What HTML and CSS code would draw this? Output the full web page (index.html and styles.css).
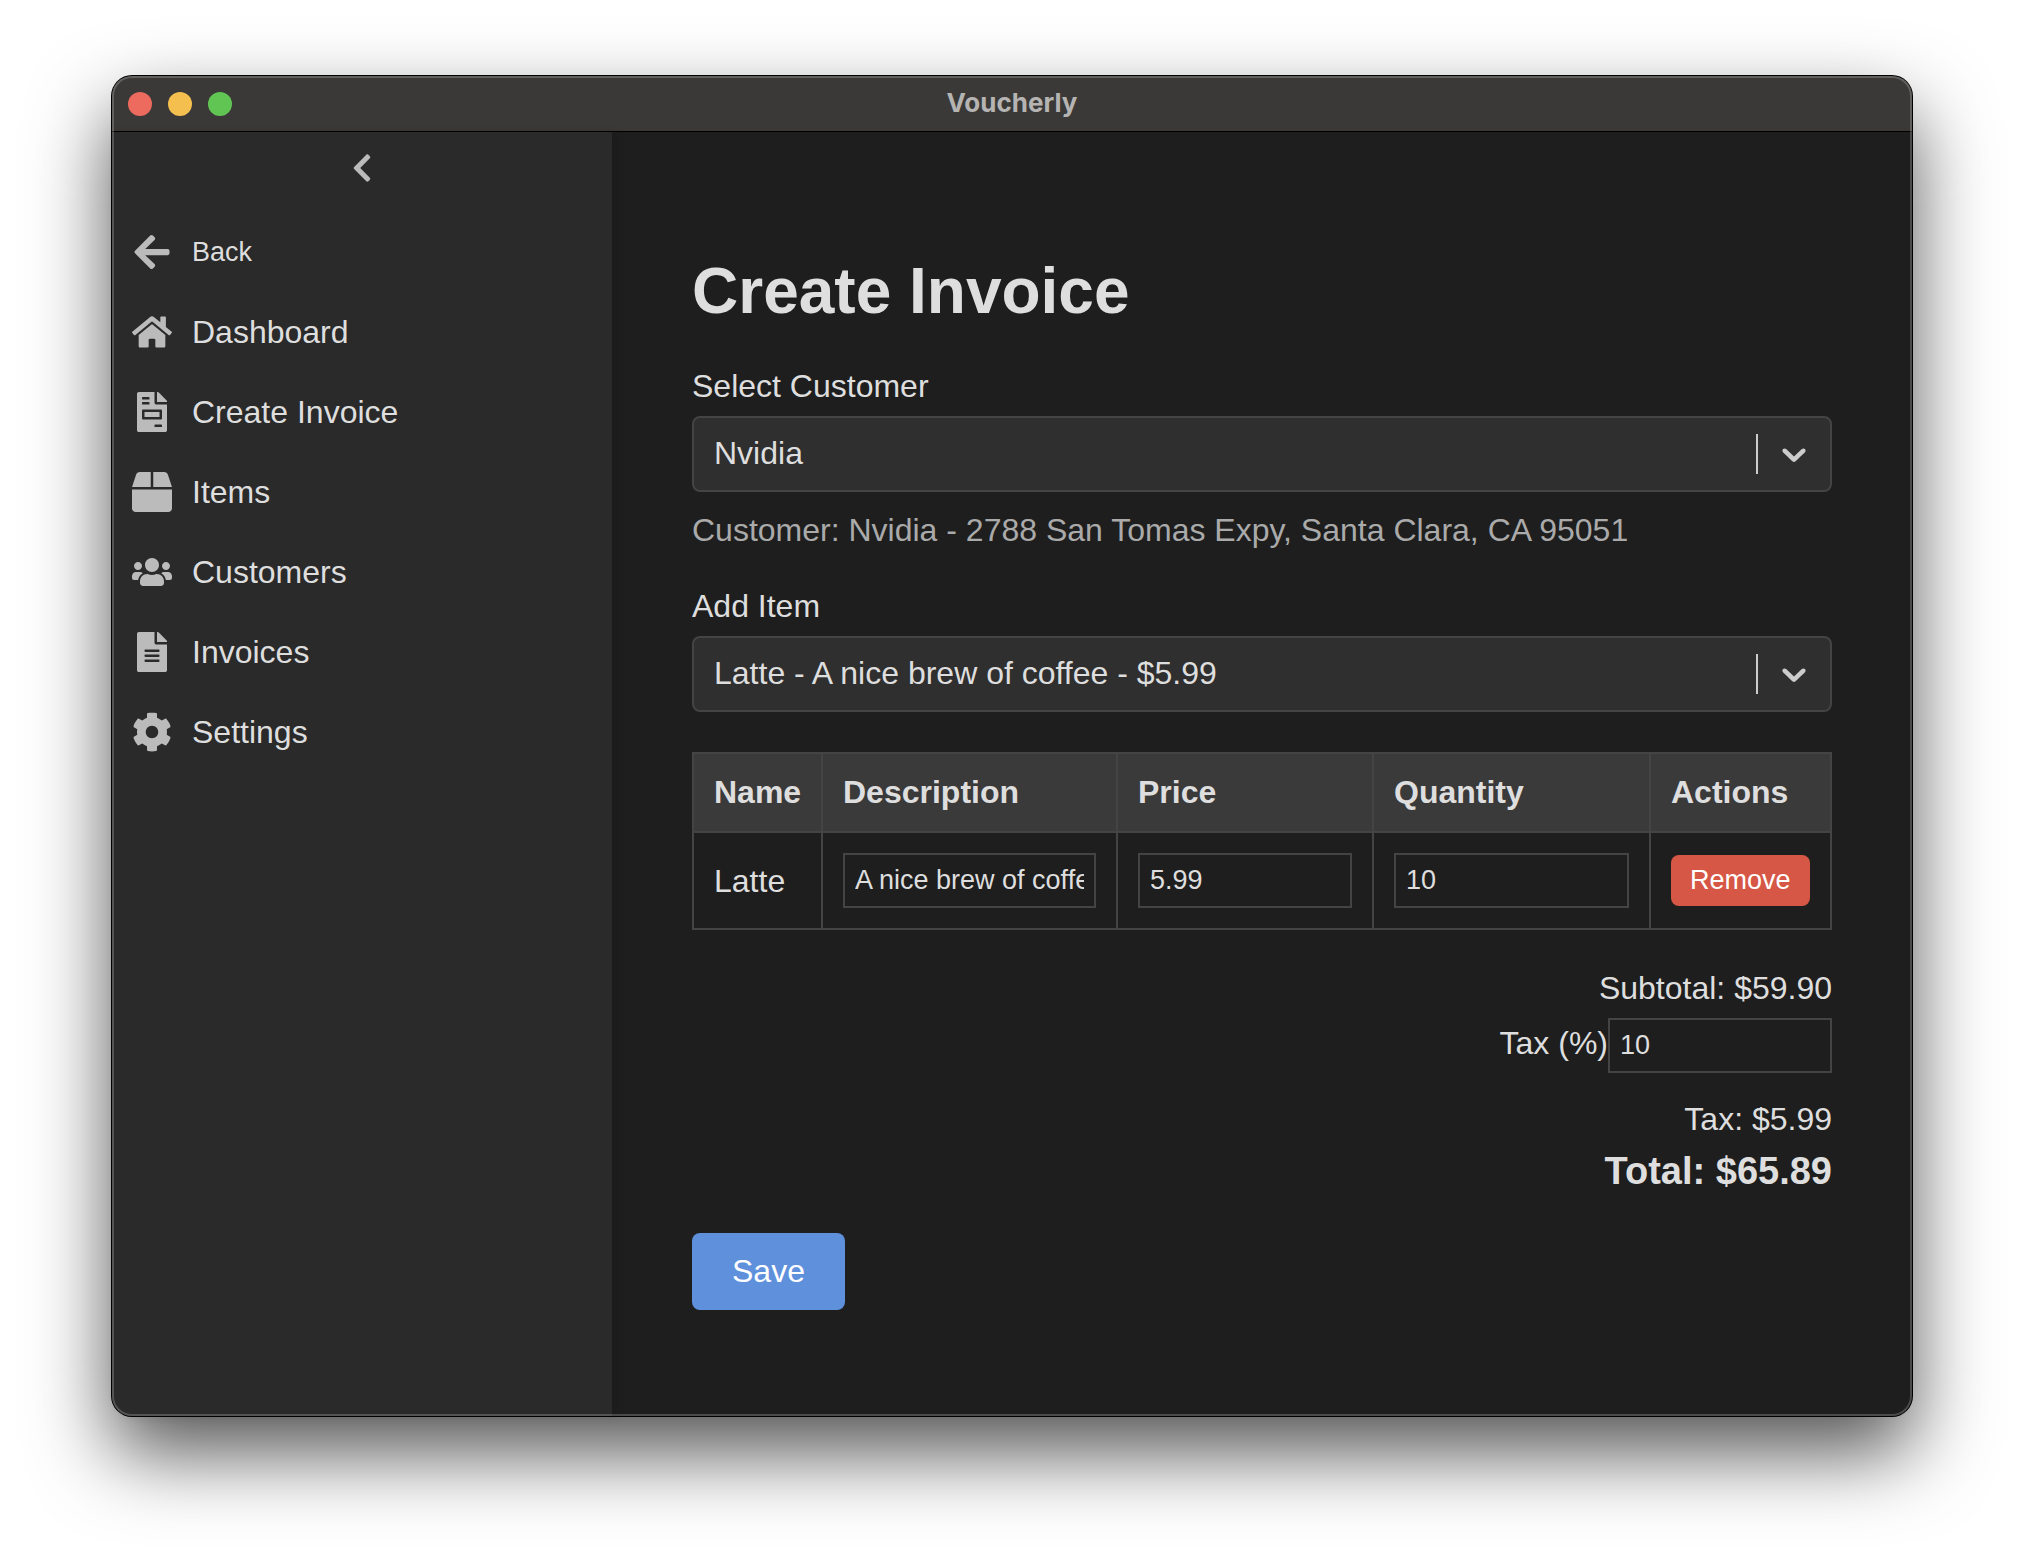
FILE: index.html
```html
<!DOCTYPE html>
<html lang="en">
<head>
<meta charset="utf-8">
<meta name="viewport" content="width=device-width, initial-scale=1">
<title>Voucherly</title>
<link rel="stylesheet" href="styles.css">
</head>
<body>
<div class="window">
  <header class="titlebar">
    <div class="lights">
      <button class="light light-close" type="button" aria-label="Close"></button>
      <button class="light light-minimize" type="button" aria-label="Minimize"></button>
      <button class="light light-zoom" type="button" aria-label="Zoom"></button>
    </div>
    <span class="titlebar-text">Voucherly</span>
  </header>
  <div class="body">
    <aside class="sidebar">
      <button class="toggle" type="button" aria-label="Collapse sidebar">
        <svg class="toggle-icon" viewBox="0 0 320 512" aria-hidden="true"><path d="M34.52 239.03L228.87 44.69c9.37-9.37 24.57-9.37 33.94 0l22.67 22.67c9.36 9.36 9.37 24.52.04 33.9L131.49 256l154.02 154.75c9.34 9.38 9.32 24.54-.04 33.9l-22.67 22.67c-9.37 9.37-24.57 9.37-33.94 0L34.52 272.97c-9.37-9.37-9.37-24.57 0-33.94z"/></svg>
      </button>
      <nav class="nav">
        <button class="nav-item nav-back" type="button">
          <svg class="nav-icon" viewBox="0 0 448 512" aria-hidden="true"><path d="M257.5 445.1l-22.2 22.2c-9.4 9.4-24.6 9.4-33.9 0L7 273c-9.4-9.4-9.4-24.6 0-33.9L201.4 44.7c9.4-9.4 24.6-9.4 33.9 0l22.2 22.2c9.5 9.5 9.3 25-.4 34.3L136.6 216H424c13.3 0 24 10.7 24 24v32c0 13.3-10.7 24-24 24H136.6l120.5 114.8c9.8 9.3 10 24.8.4 34.3z"/></svg>
          <span>Back</span>
        </button>
        <a class="nav-item" href="#dashboard">
          <svg class="nav-icon" viewBox="0 0 576 512" aria-hidden="true"><path d="M280.37 148.26L96 300.11V464a16 16 0 0 0 16 16l112.06-.29a16 16 0 0 0 15.92-16V368a16 16 0 0 1 16-16h64a16 16 0 0 1 16 16v95.64a16 16 0 0 0 16 16.05L464 480a16 16 0 0 0 16-16V300L295.67 148.26a12.19 12.19 0 0 0-15.3 0zM571.6 251.47L488 182.56V44.05a12 12 0 0 0-12-12h-56a12 12 0 0 0-12 12v72.61L318.47 43a48 48 0 0 0-61 0L4.34 251.47a12 12 0 0 0-1.6 16.9l25.5 31A12 12 0 0 0 45.15 301l235.22-193.74a12.19 12.19 0 0 1 15.3 0L530.9 301a12 12 0 0 0 16.9-1.6l25.5-31a12 12 0 0 0-1.7-16.93z"/></svg>
          <span>Dashboard</span>
        </a>
        <a class="nav-item" href="#create-invoice">
          <svg class="nav-icon" viewBox="0 0 384 512" aria-hidden="true"><path d="M288 256H96v64h192v-64zm89-151L279.1 7c-4.5-4.5-10.6-7-17-7H256v128h128v-6.1c0-6.3-2.5-12.4-7-16.9zm-153 31V0H24C10.7 0 0 10.7 0 24v464c0 13.3 10.7 24 24 24h336c13.3 0 24-10.7 24-24V160H248c-13.2 0-24-10.8-24-24zM64 72c0-4.42 3.58-8 8-8h80c4.42 0 8 3.58 8 8v16c0 4.42-3.58 8-8 8H72c-4.42 0-8-3.58-8-8V72zm0 64c0-4.42 3.58-8 8-8h80c4.42 0 8 3.58 8 8v16c0 4.42-3.58 8-8 8H72c-4.42 0-8-3.58-8-8v-16zm256 304c0 4.42-3.58 8-8 8h-80c-4.42 0-8-3.58-8-8v-16c0-4.42 3.58-8 8-8h80c4.42 0 8 3.58 8 8v16zm0-200v96c0 8.84-7.16 16-16 16H80c-8.84 0-16-7.16-16-16v-96c0-8.84 7.16-16 16-16h224c8.84 0 16 7.16 16 16z"/></svg>
          <span>Create Invoice</span>
        </a>
        <a class="nav-item" href="#items">
          <svg class="nav-icon" viewBox="0 0 512 512" aria-hidden="true"><path d="M509.5 184.6L458.9 32.8C452.4 13.2 434.1 0 413.4 0H272v192h238.7c-.4-2.5-.4-5-1.2-7.4zM240 0H98.6c-20.7 0-39 13.2-45.5 32.8L2.5 184.6c-.8 2.4-.8 4.9-1.2 7.4H240V0zM0 224v240c0 26.5 21.5 48 48 48h416c26.5 0 48-21.5 48-48V224H0z"/></svg>
          <span>Items</span>
        </a>
        <a class="nav-item" href="#customers">
          <svg class="nav-icon" viewBox="0 0 640 512" aria-hidden="true"><path d="M96 224c35.3 0 64-28.7 64-64s-28.7-64-64-64-64 28.7-64 64 28.7 64 64 64zm448 0c35.3 0 64-28.7 64-64s-28.7-64-64-64-64 28.7-64 64 28.7 64 64 64zm32 32h-64c-17.6 0-33.5 7.1-45.1 18.6 40.3 22.1 68.9 62 75.1 109.4h66c17.7 0 32-14.3 32-32v-32c0-35.3-28.7-64-64-64zm-256 0c61.9 0 112-50.1 112-112S381.9 32 320 32 208 82.1 208 144s50.1 112 112 112zm76.8 32h-8.3c-20.8 10-43.9 16-68.5 16s-47.6-6-68.5-16h-8.3C179.6 288 128 339.6 128 403.2V432c0 26.5 21.5 48 48 48h288c26.5 0 48-21.5 48-48v-28.8c0-63.6-51.6-115.2-115.2-115.2zm-223.7-13.4C161.5 263.1 145.6 256 128 256H64c-35.3 0-64 28.7-64 64v32c0 17.7 14.3 32 32 32h65.9c6.3-47.4 34.9-87.3 75.2-109.4z"/></svg>
          <span>Customers</span>
        </a>
        <a class="nav-item" href="#invoices">
          <svg class="nav-icon" viewBox="0 0 384 512" aria-hidden="true"><path d="M224 136V0H24C10.7 0 0 10.7 0 24v464c0 13.3 10.7 24 24 24h336c13.3 0 24-10.7 24-24V160H248c-13.2 0-24-10.8-24-24zm64 236c0 6.6-5.4 12-12 12H108c-6.6 0-12-5.4-12-12v-8c0-6.6 5.4-12 12-12h168c6.6 0 12 5.4 12 12v8zm0-64c0 6.6-5.4 12-12 12H108c-6.6 0-12-5.4-12-12v-8c0-6.6 5.4-12 12-12h168c6.6 0 12 5.4 12 12v8zm0-72v8c0 6.6-5.4 12-12 12H108c-6.6 0-12-5.4-12-12v-8c0-6.6 5.4-12 12-12h168c6.6 0 12 5.4 12 12zm96-114.1v6.1H256V0h6.1c6.4 0 12.5 2.5 17 7l97.9 98c4.5 4.5 7 10.6 7 16.9z"/></svg>
          <span>Invoices</span>
        </a>
        <a class="nav-item" href="#settings">
          <svg class="nav-icon" viewBox="0 0 512 512" aria-hidden="true"><path d="M487.4 315.7l-42.6-24.6c4.3-23.2 4.3-47 0-70.2l42.6-24.6c4.9-2.8 7.1-8.6 5.5-14-11.1-35.6-30-67.8-54.7-94.6-3.8-4.1-10-5.1-14.8-2.3L380.8 110c-17.9-15.4-38.5-27.3-60.8-35.1V25.8c0-5.6-3.9-10.5-9.4-11.7-36.7-8.2-74.3-7.8-109.2 0-5.5 1.2-9.4 6.1-9.4 11.7V75c-22.2 7.9-42.8 19.8-60.8 35.1L88.7 85.5c-4.9-2.8-11-1.9-14.8 2.3-24.7 26.7-43.6 58.9-54.7 94.6-1.7 5.4.6 11.2 5.5 14L67.3 221c-4.3 23.2-4.3 47 0 70.2l-42.6 24.6c-4.9 2.8-7.1 8.6-5.5 14 11.1 35.6 30 67.8 54.7 94.6 3.8 4.1 10 5.1 14.8 2.3l42.6-24.6c17.9 15.4 38.5 27.3 60.8 35.1v49.2c0 5.6 3.9 10.5 9.4 11.7 36.7 8.2 74.3 7.8 109.2 0 5.5-1.2 9.4-6.1 9.4-11.7v-49.2c22.2-7.9 42.8-19.8 60.8-35.1l42.6 24.6c4.9 2.8 11 1.9 14.8-2.3 24.7-26.7 43.6-58.9 54.7-94.6 1.5-5.5-.7-11.3-5.6-14.1zM256 336c-44.1 0-80-35.9-80-80s35.9-80 80-80 80 35.9 80 80-35.9 80-80 80z"/></svg>
          <span>Settings</span>
        </a>
      </nav>
    </aside>
    <main class="main">
      <h1 class="heading">Create Invoice</h1>
      <form class="form">
        <div class="field">
          <label for="customer">Select Customer</label>
          <div class="picker">
            <select class="picker-select" id="customer"><option>Nvidia</option></select>
            <span class="picker-indicator" aria-hidden="true">
              <svg class="picker-icon" viewBox="0 0 20 20"><path d="M4.516 7.548c0.436-0.446 1.043-0.481 1.576 0l3.908 3.747 3.908-3.747c0.533-0.481 1.141-0.446 1.574 0 0.436 0.445 0.408 1.197 0 1.615-0.406 0.418-4.695 4.502-4.695 4.502-0.217 0.223-0.502 0.335-0.787 0.335s-0.57-0.112-0.789-0.335c0 0-4.287-4.084-4.695-4.502s-0.436-1.17 0-1.615z"/></svg>
            </span>
          </div>
          <p class="customer-info">Customer: Nvidia - 2788 San Tomas Expy, Santa Clara, CA 95051</p>
        </div>
        <div class="field">
          <label for="item">Add Item</label>
          <div class="picker">
            <select class="picker-select" id="item"><option>Latte - A nice brew of coffee - $5.99</option></select>
            <span class="picker-indicator" aria-hidden="true">
              <svg class="picker-icon" viewBox="0 0 20 20"><path d="M4.516 7.548c0.436-0.446 1.043-0.481 1.576 0l3.908 3.747 3.908-3.747c0.533-0.481 1.141-0.446 1.574 0 0.436 0.445 0.408 1.197 0 1.615-0.406 0.418-4.695 4.502-4.695 4.502-0.217 0.223-0.502 0.335-0.787 0.335s-0.57-0.112-0.789-0.335c0 0-4.287-4.084-4.695-4.502s-0.436-1.17 0-1.615z"/></svg>
            </span>
          </div>
        </div>
        <table class="items">
          <colgroup>
            <col class="col-name"><col><col class="col-price"><col class="col-quantity"><col class="col-actions">
          </colgroup>
          <thead>
            <tr><th scope="col">Name</th><th scope="col">Description</th><th scope="col">Price</th><th scope="col">Quantity</th><th scope="col">Actions</th></tr>
          </thead>
          <tbody>
            <tr>
              <td>Latte</td>
              <td><input class="input" type="text" aria-label="Description" value="A nice brew of coffee"></td>
              <td><input class="input" type="text" inputmode="decimal" aria-label="Price" value="5.99"></td>
              <td><input class="input" type="text" inputmode="numeric" aria-label="Quantity" value="10"></td>
              <td><button class="remove" type="button">Remove</button></td>
            </tr>
          </tbody>
        </table>
        <div class="totals">
          <p>Subtotal: $59.90</p>
          <div class="tax-rate">
            <label for="tax">Tax (%)</label>
            <input class="input tax-input" id="tax" type="text" inputmode="numeric" value="10">
          </div>
          <p class="tax">Tax: $5.99</p>
          <p class="total">Total: $65.89</p>
        </div>
        <button class="save" type="button">Save</button>
      </form>
    </main>
  </div>
</div>
</body>
</html>
```
FILE: styles.css
```css
*, *::before, *::after {
  box-sizing: border-box;
}

body {
  margin: 0;
  min-height: 100vh;
  padding: 76px 112px 148px;
  display: flex;
  background: #fff;
  color: #dedede;
  font: 32px/36px "Liberation Sans", Arial, sans-serif;
}

p, h1 {
  margin: 0;
}

button, input, select {
  margin: 0;
  font-family: inherit;
  color: inherit;
}

button {
  border: 0;
  cursor: pointer;
}

/* Window frame */
.window {
  position: relative;
  flex: 1;
  display: flex;
  flex-direction: column;
  border-radius: 20px;
  background: #1e1e1e;
  box-shadow: 0 0 0 1px #000, 0 36px 80px rgba(0, 0, 0, 0.68);
}

.window::after {
  content: "";
  position: absolute;
  inset: 0;
  border-radius: inherit;
  box-shadow: inset 0 0 0 2px rgba(255, 255, 255, 0.2);
  pointer-events: none;
}

.titlebar {
  display: grid;
  grid-template-columns: 1fr auto 1fr;
  align-items: center;
  height: 56px;
  padding: 0 16px;
  border-bottom: 1px solid #000;
  border-radius: 20px 20px 0 0;
  background: #3a3937;
}

.lights {
  display: flex;
  gap: 16px;
}

.light {
  width: 24px;
  height: 24px;
  padding: 0;
  border-radius: 50%;
}

.light-close { background: #ed6a5e; }
.light-minimize { background: #f5bf4f; }
.light-zoom { background: #61c554; }

.titlebar-text {
  padding-bottom: 2px;
  color: #b5b4b2;
  font: bold 26px/32px Inter, sans-serif;
}

.body {
  flex: 1;
  display: flex;
}

/* Sidebar */
.sidebar {
  flex: 0 0 500px;
  display: flex;
  flex-direction: column;
  gap: 28px;
  padding-top: 20px;
  border-bottom-left-radius: 20px;
  background: #2a2a2a;
  box-shadow: 4px 0 10px rgba(0, 0, 0, 0.1);
}

.toggle {
  align-self: center;
  display: flex;
  padding: 0;
  background: none;
}

.toggle-icon {
  width: 20px;
  height: 32px;
  fill: #bbb;
}

.nav {
  display: flex;
  flex-direction: column;
}

.nav-item {
  display: flex;
  align-items: center;
  gap: 20px;
  height: 80px;
  padding: 0 20px;
  background: none;
  color: inherit;
  text-decoration: none;
}

.nav-back {
  font-size: 27px;
}

.nav-icon {
  width: 40px;
  height: 40px;
  fill: #bbb;
}

/* Invoice form */
.main {
  flex: 1;
  min-width: 0;
  padding: 122px 80px 80px;
}

.heading {
  margin-bottom: 40px;
  font-size: 64px;
  line-height: 74px;
}

.form {
  display: flex;
  flex-direction: column;
  gap: 40px;
}

.field {
  display: flex;
  flex-direction: column;
  gap: 12px;
}

.picker {
  display: grid;
  align-items: center;
}

.picker-select {
  grid-area: 1 / 1;
  width: 100%;
  height: 76px;
  padding: 0 100px 2px 20px;
  border: 2px solid #444;
  border-radius: 8px;
  background: #2f2f2f;
  font-size: 32px;
  appearance: none;
}

.picker-indicator {
  grid-area: 1 / 1;
  justify-self: end;
  margin-right: 2px;
  padding: 0 16px;
  border-left: 2px solid #ccc;
  display: flex;
  pointer-events: none;
}

.picker-icon {
  width: 40px;
  height: 40px;
  fill: #ccc;
}

.customer-info {
  padding-top: 8px;
  color: #aaa;
}

.items {
  width: 100%;
  table-layout: fixed;
  border-collapse: collapse;
}

.col-name { width: 129px; }
.col-price { width: 256px; }
.col-quantity { width: 277px; }
.col-actions { width: 181px; }

.items th,
.items td {
  padding: 20px;
  border: 2px solid #444;
  text-align: left;
  vertical-align: middle;
}

.items th {
  background: #3a3a3a;
  line-height: 37px;
}

.input {
  display: block;
  width: 100%;
  height: 55px;
  padding: 0 10px;
  border: 2px solid #444;
  border-radius: 0;
  background: #1e1e1e;
  font-size: 27px;
}

.remove {
  display: block;
  padding: 10px 19px;
  border-radius: 8px;
  background: #d65745;
  color: #fff;
  font-size: 27px;
  line-height: 31px;
}

.totals {
  display: flex;
  flex-direction: column;
  align-items: flex-end;
  gap: 12px;
}

.tax-rate {
  display: flex;
  align-items: baseline;
}

.tax-input {
  width: 224px;
}

.tax {
  padding-top: 16px;
}

.total {
  font-size: 38px;
  font-weight: bold;
  line-height: 44px;
}

.save {
  align-self: flex-start;
  padding: 20px 40px;
  border-radius: 8px;
  background: #5e90dc;
  color: #fff;
  font-size: 32px;
  line-height: 37px;
}
```
